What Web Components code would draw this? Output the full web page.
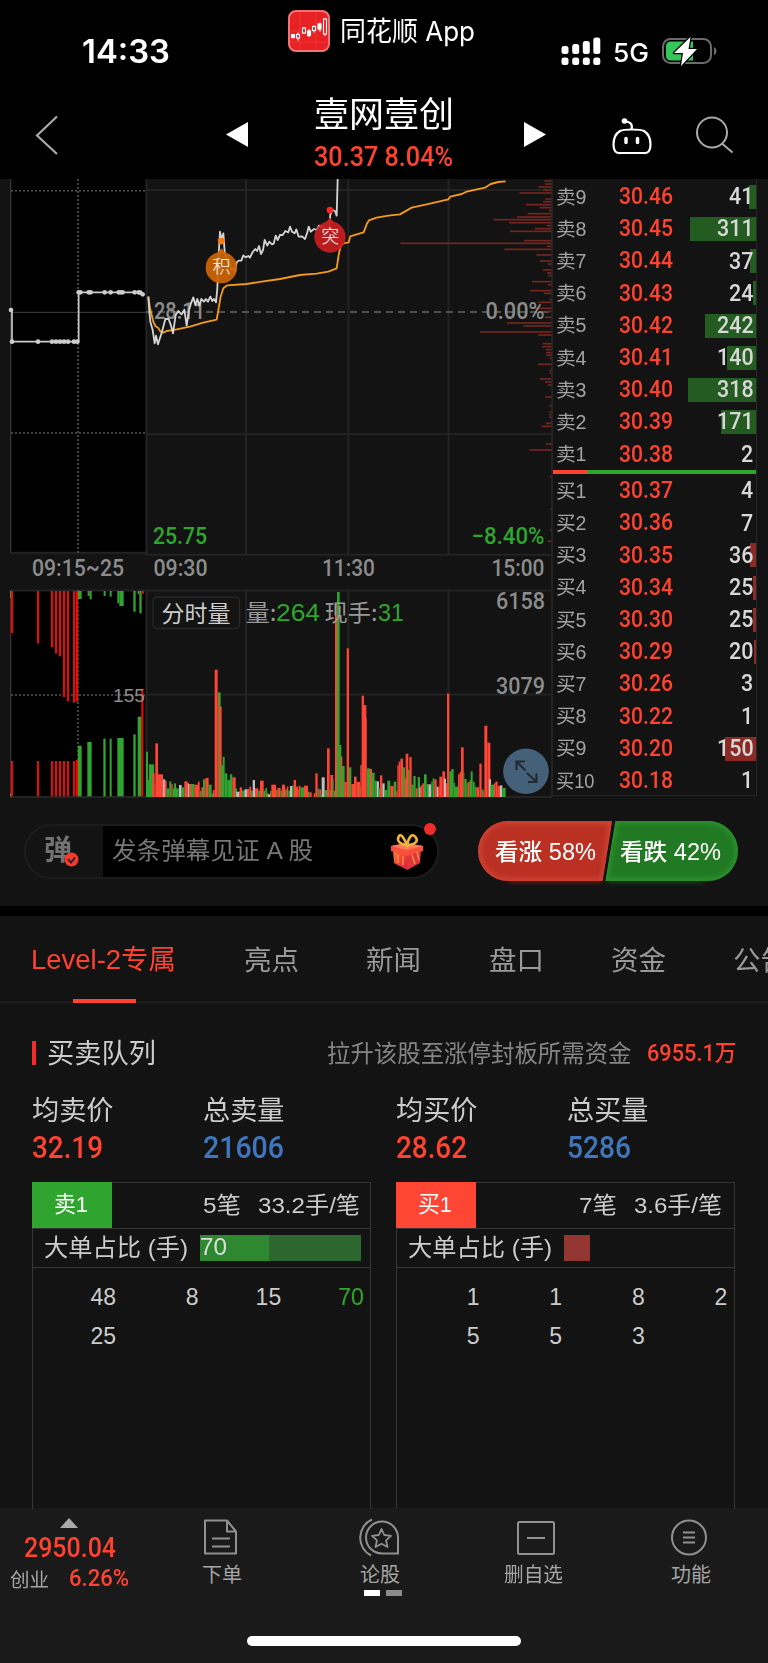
<!DOCTYPE html>
<html lang="zh-CN">
<head>
<meta charset="utf-8">
<title>壹网壹创</title>
<style>
html,body{margin:0;padding:0;background:#131313}
body{width:768px;height:1663px;overflow:hidden}
</style>
</head>
<body>
<stock-app></stock-app>
<script>
const CJK = "'Noto Sans CJK SC','Noto Sans',sans-serif";
const NUM = 'Roboto,' + CJK;
const ARI = "'Liberation Sans'," + CJK;
const define = (name, render, after) => customElements.define(name, class extends HTMLElement {
  connectedCallback() {
    if (this.shadowRoot) return;
    this.attachShadow({mode: 'open'}).innerHTML = render(this);
    if (after) after(this);
  }
});

/* Text squeezed or stretched to an exact width */
define('fit-text', el => `<style>
:host{display:inline-block;flex:none;line-height:1.2;white-space:nowrap;width:${el.getAttribute('w')}px;font-size:${el.getAttribute('s')}px}
span{display:inline-block;transform-origin:0 50%}</style><span><slot></slot></span>`,
el => {
  const s = el.shadowRoot.querySelector('span');
  const n = s.getBoundingClientRect().width;
  if (n) s.style.transform = `scaleX(${el.getAttribute('w') / n})`;
});

define('status-bar', () => `<style>
:host{display:grid;grid-template-columns:288px 273px 1fr;height:80px;color:#fff;font-family:Inter,${CJK}}
.time{padding:33px 0 0 82px;font-weight:600}
.app{display:flex;gap:9.500px;padding-top:10px}
.app fit-text{margin-top:6px}
.sys{display:flex;align-items:flex-start}
.net{margin:37px 0 0 12px;font-weight:500}
</style>
<div class="time"><fit-text w="88" s="32">14:33</fit-text></div>
<div class="app"><svg width="42" height="42" viewBox="0 0 42 42"><rect x="1" y="1" width="40" height="40" rx="7" fill="#e82224" stroke="#f47376" stroke-width="2"/>
<path d="M12 2v38M28 2v38M2 21h38M2 32h38" stroke="#ef4343" stroke-width=".6"/>
<g stroke="#fff" stroke-width="1.1" fill="#fff"><path d="M5 24v4.500M10 22.500v8M16 17v7M21 19v8M26 15.500v7M32 12.500v9M37 8v18"/><rect x="3.500" y="24.500" width="3" height="3"/><rect x="8.500" y="24.500" width="3" height="3.500" fill="#e82224"/><rect x="14.500" y="18" width="3" height="5" fill="#e82224"/><rect x="19.500" y="21" width="3" height="4.500"/><rect x="24.500" y="16.500" width="3" height="4" fill="#e82224"/><rect x="30" y="14" width="3" height="5"/><rect x="35.500" y="9" width="3" height="15" fill="#e82224"/></g></svg>
<fit-text w="135" s="27">同花顺 App</fit-text></div>
<div class="sys"><svg width="40" height="68" viewBox="0 0 40 68" fill="#fff"><rect x=".5" y="46" width="7" height="8" rx="2.500"/><rect x="11.200" y="44" width="7" height="10" rx="2.500"/><rect x="21.800" y="41" width="7" height="13" rx="2.500"/><rect x="32.300" y="37.500" width="7" height="16.500" rx="2.500"/><rect x=".5" y="57.500" width="7" height="7.500" rx="2.500"/><rect x="11.200" y="57.500" width="7" height="7.500" rx="2.500"/><rect x="21.800" y="57.500" width="7" height="7.500" rx="2.500"/><rect x="32.300" y="57.500" width="7" height="7.500" rx="2.500"/></svg>
<div class="net"><fit-text w="36" s="26">5G</fit-text></div>
<svg style="margin:36px 0 0 12px" width="56" height="30" viewBox="0 0 56 30"><rect x="2" y="3" width="48" height="24" rx="7.500" fill="none" stroke="#6b6b6b" stroke-width="2"/><path d="M53 11q2.500 1 2.500 4t-2.500 4z" fill="#6b6b6b"/><path d="M10 5.500h22v19H10q-5 0-5-5v-9q0-5 5-5z" fill="#34c759"/><path d="M29.500 1L13 17h9L20 30 36 13h-8.500z" fill="#fff" stroke="#000" stroke-width="2.500" stroke-linejoin="round" paint-order="stroke"/></svg></div>`);

define('stock-header', () => `<style>
:host{display:grid;grid-template-columns:226px 88px 140px 158px 1fr;height:99px;color:#fff;font-family:${NUM}}
svg{display:block}
.name{display:flex;flex-direction:column;padding-top:11px;height:84px}
.price{color:#ff4330;margin-top:8px;font-weight:500}
.r{display:flex}
</style>
<svg width="226" height="90"><path d="M57 36.500L37 55.500 57 74" fill="none" stroke="#aaa" stroke-width="2.200"/></svg>
<svg width="88" height="90"><path d="M0 54.500L22 42v25z" fill="#fff"/></svg>
<div class="name"><fit-text w="140" s="35" style="font-family:${CJK}">壹网壹创</fit-text><fit-text class="price" w="139" s="27">30.37 8.04%</fit-text></div>
<svg width="158" height="90"><path d="M70 42v25l22-12.500z" fill="#fff"/></svg>
<div class="r"><svg width="84" height="90"><g fill="none" stroke="#fff" stroke-width="2.200"><path d="M8 51Q11 49.500 20 49.500t12 1.500Q38.500 55 38.500 64.500t-7 8.500h-23q-7 1-7-8.500T8 51z"/><path d="M19.500 49.500Q21.500 42 13 41.500"/></g><circle cx="12.500" cy="41" r="2.800" fill="#fff"/><path d="M14 58.500v4M25.500 58.500v4" stroke="#fff" stroke-width="3.500" stroke-linecap="round"/></svg>
<svg width="60" height="90"><g fill="none" stroke="#aaa" stroke-width="2"><circle cx="16" cy="52.500" r="15"/><path d="M26 63.500l10.500 9"/></g></svg></div>`);

/* ---- intraday chart ---- */
const R = '#ff4533', G = '#2fa52f', W = '#bdbdbd';
const profile = [18,823,27,825,36,805,45,819,54,748,72,826,80,819,89,767,98,810,107,837,116,773,126,741,134,670,143,717,152,830,161,795,169,720,197,763,205,391,214,831,223,703,240,799,258,809,267,833,285,819,294,831,302,835,320,786,329,834,347,781,355,821,373,839,382,805,400,792,409,830,427,825,444,711,453,760,471,630,480,804,506,818,515,816,524,828,533,828,541,829,550,839,568,804,587,838,595,840,612,809,621,825,630,834,666,826,692,838,710,838,719,838,727,838,745,828,754,814,807,828,825,779,905,840,1002,841,1065,840,1099,833];
const volA = 'g438-444 515,g444-448 600,g447-462 553,r457-464 580,r464-466 610,r466-474 490,r474-489 583,w489-496 598,r494-500 603,g500-508 625,g508-514 604,r514-518 612,g518-522 625,g522-528 610,g528-536 625,w537-545 615,g545-553 622,r553-563 604,w563-567 610,r567-573 612,g573-583 612,r583-594 614,r594-599 605,g599-604 633,r604-609 622,g609-616 598,r616-626 594,g626-635 614,g635-640 640,r639-644 630,g654-662 337,r659-665 380,r644-653 269,r653-656 350,g663-670 556,g668-674 530,g674-682 580,g682-690 600,g690-697 583,r697-707 592,g705-711 625,w709-719 635,r719-726 622,g726-733 632,w733-741 628,r741-748 627,r748-753 620,g753-758 632,w758-765 600,r765-775 625,g775-780 632,r780-791 602,g790-796 632,g796-801 624,r801-806 640,w804-810 643';
const volB = 'g0-4 633,r4-18 614,g18-22 630,r22-32 624,g32-36 632,r36-45 614,g45-50 628,r50-55 620,g55-60 632,w60-66 618,g66-71 616,r71-78 600,r78-84 620,g84-86 628,r86-91 617,g91-102 622,r102-114 617,g114-119 635,r119-125 637,r131-136 640,r136-143 580,g143-148 626,r148-153 628,g150-155 645,w155-164 592,g164-171 630,r171-179 505,g179-183 630,r181-189 585,g187-191 597,g191-195 632,r195-201 70,g207-214 495,g201-209 36,r213-217 530,g216-224 558,r223-230 606,g236-244 562,r230-237 205,r244-252 612,r252-260 590,r260-270 606,g269-273 620,r271-275 555,r275-282 347,r281-289 375,r289-291 415,g291-300 565,r300-306 567,g305-314 578,g314-320 602,w320-327 604,g325-330 625,r330-337 586,w337-344 610,g344-352 630,g352-361 602,r361-371 618,g371-379 605,r379-383 634,r382-386 556,r386-391 545,r391-399 536,g398-405 562,r405-408 595,r407-415 521,g414-419 570,r418-425 531,g424-430 614,g430-437 588,r437-443 625,g443-450 591,w448-452 622,r452-457 616,r457-462 610,g462-470 583,g470-475 612,w475-484 613,g484-488 604,g488-493 595,r493-500 598,w500-504 620,r504-509 620,r508-517 590,r517-525 574,w522-528 596,r528-531 610,r531-538 341,g538-546 574,g544-551 567,g551-555 608,g555-564 620,r564-569 583,r569-573 576,r573-581 502,g580-583 577,g583-590 597,g590-593 610,r593-599 606,g599-603 600,g602-608 574,g608-614 605,g614-619 620,r619-627 622,r628-635 551,g635-640 628,r640-643 632,r643-652 437,r652-661 488,w657-663 598,g661-672 614,r672-676 610,r676-683 605,r683-690 618,w690-697 616,g697-707 624';
const vol = s => s.split(',').map(b => {
  const [, c, a, z, t] = b.match(/(.)(\d+)-(\d+) (\d+)/);
  return `<rect x="${a}" y="${t}" width="${z - a}" height="${651 - t}" fill="${{r: R, g: G, w: W}[c]}"/>`;
}).join('');
const boxes = (list, c) => list.map(([a, z, t, b]) => `<rect x="${a}" y="${t}" width="${z - a}" height="${b - t}" fill="${c}"/>`).join('');
const T = (x, y, w, s, t, c, f = NUM, k = 500) => `<text x="${x}" y="${y}" textLength="${w}" lengthAdjust="spacingAndGlyphs" font-size="${s}" fill="${c}" font-weight="${k}" style="font-family:${f}">${t}</text>`;
const redX = [33,111,153,165,177,189,201,219,228], redB = [159,190,201,221,229,351,363,368,365];

define('intraday-chart', () => `<style>:host{display:block;width:553px;height:626px}svg{display:block}</style>
<svg width="553" height="626" viewBox="0 179 553 626">
<rect x="10.500" y="179" width="135" height="374" fill="#000"/><rect x="10.500" y="591" width="135" height="206" fill="#000"/>
<g stroke="#232323" stroke-width="2" fill="none">
<path d="M146.500 179v376M246 179v376M348.300 179v376M448.500 179v376M552 179v618M146 190h406M146 434.300h406M146 554.700h406M10 552.700h136"/>
<path d="M10 590.500h542M146 694.500h406M10 797h542M146.500 590v207M246 590v207M348.300 590v207M448.500 590v207"/></g>
<path d="M10.700 179v374M10.700 590v208" stroke="#3a3a3a" stroke-width="1.200"/>
<path d="M11 190.800h134M11 433h134M78 179v374M11 695h134M78 590v206" stroke="#555" stroke-width="1.600" stroke-dasharray="2 2"/>
<path d="M11 312.300h135" stroke="#333" stroke-width="1.200"/>
<path d="M146 312h406" stroke="#666" stroke-width="1.500" stroke-dasharray="7 5"/>
<g transform="translate(270 175) scale(.33333)" fill="#74261f">${profile.map((y, i) => i % 2 ? '' : `<rect x="${profile[i + 1]}" y="${y - 2.5}" width="${844 - profile[i + 1]}" height="5"/>`).join('')}</g>
${T(154, 319, 51, 23, '28.11', '#8c8c8c')}${T(485.500, 319, 59, 23, '0.00%', '#8c8c8c')}
${T(153, 544, 54, 23, '25.75', G)}${T(471.500, 544, 73, 23, '−8.40%', G)}
${T(32, 575.500, 92, 23, '09:15~25', '#8c8c8c')}${T(153.500, 575.500, 54, 23, '09:30', '#8c8c8c')}${T(322, 575.500, 53, 23, '11:30', '#8c8c8c')}${T(491.500, 575.500, 53, 23, '15:00', '#8c8c8c')}
<g transform="translate(0 175) scale(.33333)" fill="none" stroke-linejoin="round">
<path d="M33 400l3 12v88h200V352h180l16 8" stroke="#ccc" stroke-width="5"/>
<g fill="#ccc">${[[36,500],[114,500],[156,500],[168,500],[180,500],[192,500],[204,500],[222,500],[232,500],[236,352],[241,352],[266,352],[272,352],[314,352],[332,352],[356,352],[362,352],[368,352],[404,352],[416,352],[421,353],[428,358],[33,405]].map(p => `<circle cx="${p[0]}" cy="${p[1]}" r="7"/>`).join('')}</g>
<path d="M445 365L450 400 460 440 466 453 474 458 482 470 490 473 500 468 530 463 570 455 610 443 650 434 656 400 662 365 670 340 682 331 740 327 790 319 840 312 900 300 950 296 985 290 1010 280 1016 240 1022 213 1030 205 1046 202 1051 184 1070 178 1091 172 1100 148 1107 136 1130 128 1165 122 1200 118 1235 98 1280 88 1345 73 1351 65 1385 57 1400 50 1455 38 1472 27 1495 21 1517 19" stroke="#f59a1c" stroke-width="5.500"/>
<path d="M445 365L448 410 451 440 458 465 464 505 468 482 474 508 486 470 496 432 506 432 514 455 519 475 527 420 535 408 545 418 553 404 560 452 567 405 573 385 580 367 586 390 592 372 598 392 604 372 612 380 618 372 624 380 631 365 637 378 642 372 648 382 652 340 656 240 660 170 665 195 670 175 674 230 680 255 688 265 694 285 700 278 705 290 710 262 716 257 724 257 730 241 737 247 745 243 750 248 758 231 766 222 771 228 777 213 783 237 789 225 794 195 802 212 808 200 816 208 821 206 827 182 833 195 840 180 848 180 856 168 865 172 870 155 876 170 884 175 889 163 896 185 906 184 915 192 922 172 926 155 932 170 942 162 950 165 957 152 968 158 980 163 988 160 991 118 998 105 1005 108 1010 122 1013 12" stroke="#d2d2d2" stroke-width="5.500"/>
<circle cx="664" cy="278" r="47" fill="#cc6404" fill-opacity=".93"/><path d="M650 236l14-16 14 16z" fill="#cc6404"/><circle cx="664" cy="198" r="10" fill="#ff7a0e"/>
<circle cx="990" cy="186" r="47" fill="#c71e20" fill-opacity=".93"/><path d="M976 144l14-16 14 16z" fill="#c71e20"/><circle cx="990" cy="105" r="10" fill="#ff2626"/>
</g>
${T(212.500, 273, 18, 18, '积', '#fff', CJK, 300)}${T(321.300, 243, 18, 18, '突', '#fff', CJK, 300)}
<g transform="translate(0 580) scale(.33333)">
${boxes(redX.map((x, i) => [x, x + 6, 33, redB[i]]), '#f40404')}${boxes(redX.map(x => [x, x + 6, x == 228 ? 540 : 543, 649]), '#f40404')}
${boxes([[30,33,33,55],[234,245,33,57],[263,269,33,48],[269,275,33,58],[311,317,33,48],[329,335,33,50],[352,358,33,70],[358,371,33,78],[400,407,33,95],[413,418,33,42],[418,425,33,100],[234,245,497,649],[262,275,486,649],[310,317,476,649],[329,335,476,649],[352,371,474,649],[400,407,463,649],[413,425,410,649],[30,33,641,649]], G)}
${boxes([[425,432,33,41],[424,430,326,649]], '#f40404')}${vol(volA)}</g>
<g transform="translate(270 580) scale(.33333)">${vol(volB)}</g>
${T(113, 701.500, 32, 18.5, '155', '#8c8c8c', ARI, 400)}
<rect x="153" y="597" width="86.500" height="31.500" rx="4" fill="#131313" stroke="#272727" stroke-width="1.500"/>
${T(161.500, 622, 69, 23, '分时量', '#ccc', CJK, 400)}
${T(245.500, 621, 31, 23, '量:', '#999', CJK, 400)}${T(276, 620.500, 44, 24.5, '264', G, ARI, 400)}
${T(324.500, 621, 53, 23, '现手:', '#999', CJK, 400)}${T(378, 620.500, 26, 24.5, '31', G, ARI, 400)}
${T(496, 609, 49, 23, '6158', '#8c8c8c')}${T(496, 693.500, 49, 23, '3079', '#8c8c8c')}
<circle cx="526" cy="771.300" r="22.800" fill="#456179"/>
<path d="M516.500 770v-8.500h8.500M516.500 761.500l9 9M527 773l9.500 9M536.500 773.500v8.500h-8.500" fill="none" stroke="#222b33" stroke-width="2.200"/>
</svg>`);

/* ---- order book ---- */
define('order-row', el => `<style>
:host{display:grid;box-sizing:border-box;grid-template-columns:63px 54px 1fr;align-items:center;height:32.200px;padding:0 2.500px 1.500px 3px;font-family:${NUM};font-weight:500;
background:linear-gradient(${el.dataset.c},${el.dataset.c}) right center/${el.dataset.w}px 24px no-repeat}
.l{color:#a3a3a3;font-weight:400;font-family:${ARI};padding-top:2.500px}.p{color:#ff4330}.q{color:#d8d8d8;text-align:right;height:28px}
</style><fit-text class="l" w="${el.dataset.l.length > 2 ? 38.5 : 30.5}" s="19.500">${el.dataset.l}</fit-text>
<fit-text class="p" w="54" s="23.500">${el.dataset.p}</fit-text><div class="q"><fit-text w="${12.2 * el.dataset.q.length}" s="23.500">${el.dataset.q}</fit-text></div>`);
const asks = [['卖9','30.46',41,7],['卖8','30.45',311,66],['卖7','30.44',37,6],['卖6','30.43',24,3],['卖5','30.42',242,51],['卖4','30.41',140,29],['卖3','30.40',318,68],['卖2','30.39',171,35],['卖1','30.38',2,0]];
const bids = [['买1','30.37',4,0],['买2','30.36',7,0],['买3','30.35',36,6],['买4','30.34',25,3],['买5','30.30',25,3],['买6','30.29',20,2.5],['买7','30.26',3,0],['买8','30.22',1,0],['买9','30.20',150,31],['买10','30.18',1,0]];
const rows = (a, c) => a.map(r => `<order-row data-l="${r[0]}" data-p="${r[1]}" data-q="${r[2]}" data-w="${r[3]}" data-c="${c}"></order-row>`).join('');
define('order-book', () => `<style>
:host{display:block;box-sizing:border-box;width:204px;height:617px;padding-top:1.800px;border-right:1px solid #282828;border-bottom:1px solid #282828}
.div{height:4px;background:linear-gradient(90deg,#ff4330 34px,#2fa52f 34px);margin-bottom:.5px}
</style>${rows(asks, '#235b21')}<div class="div"></div>${rows(bids, '#8a2a25')}`);

/* ---- comment + vote bar ---- */
define('danmu-bar', () => `<style>
:host{display:flex;box-sizing:border-box;height:101px;padding:16px 29px 0 24px;font-family:${ARI}}
.box{position:relative;box-sizing:border-box;display:flex;flex:none;width:415px;height:55px;margin-top:2.500px;border:2px solid #1c1c1c;border-radius:28px}
.ic{position:relative;flex:none;width:77px;color:#727272;font-weight:700;box-sizing:border-box;padding:8px 0 0 18px}
.ic svg{position:absolute;left:38px;top:26px}
.in{flex:1;display:flex;align-items:center;background:#000;border-radius:0 26px 26px 0;color:#777;padding:1px 13px 0 9px;justify-content:space-between}
.dot{position:absolute;right:1px;top:-3px;width:12px;height:12px;border-radius:50%;background:#ee2c2c}
.vote{position:relative;flex:none;margin-left:39px;width:261px;height:66px;color:#fff;font-weight:500}
.vote .t{position:absolute;inset:0;display:flex;padding:18px 0 0 16.500px;gap:24.500px}
</style>
<div class="box"><div class="ic"><fit-text w="28" s="28">弹</fit-text><svg width="15" height="15"><circle cx="7.500" cy="7.500" r="7" fill="#f23a2e"/><path d="M4 7l3 3.500L11 5.500" fill="none" stroke="#222" stroke-width="1.800"/></svg></div>
<div class="in"><fit-text w="201" s="24">发条弹幕见证 A 股</fit-text>
<svg width="34" height="38" viewBox="0 0 34 38"><defs><linearGradient id="g" x1="0" y1="0" x2="1" y2="1"><stop offset="0" stop-color="#ff7a4a"/><stop offset=".5" stop-color="#f4452e"/><stop offset="1" stop-color="#d3204d"/></linearGradient></defs>
<path d="M3 17l14 4v16L4 30z" fill="url(#g)"/><path d="M17 21l14-4-1 13-13 7z" fill="#e2343a"/><path d="M1 13l15-3 17 3v5l-16 5-16-5z" fill="#f8503a"/><path d="M1 13l15-3 17 3-16 4z" fill="#ff7857"/><path d="M8 22v8M13 23v9M22 22l3 9M27 19l2 8" stroke="#ffa053" stroke-width="1.200"/>
<path d="M17 12.500Q6 10 8.500 4t8.500 8q3.500-14 8.500-8T17 12.500" fill="none" stroke="#f0b43c" stroke-width="2.600"/></svg></div><i class="dot"></i></div>
<div class="vote"><svg width="261" height="66"><defs><filter id="b" x="-10%" y="-20%" width="120%" height="140%"><feGaussianBlur stdDeviation="2.500"/></filter>
<clipPath id="l"><path d="M30 0H134l-9 60H30A30 30 0 0 1 30 0z"/></clipPath><clipPath id="r"><path d="M137 0h93a30 30 0 0 1 0 60H127z"/></clipPath></defs>
<path d="M30 2H132l-9 60H30z" fill="#5c1b17" filter="url(#b)"/><path d="M137 2h93l-4 60H129z" fill="#163f18" filter="url(#b)"/>
<g clip-path="url(#l)"><rect width="140" height="60" fill="#ba3124"/><path d="M30 0H134l-9 60H30A30 30 0 0 1 30 0z" fill="none" stroke="#d34434" stroke-width="5" filter="url(#b)"/></g>
<g clip-path="url(#r)"><rect x="120" width="141" height="60" fill="#217a23"/><path d="M137 0h93a30 30 0 0 1 0 60H127z" fill="none" stroke="#2d942e" stroke-width="5" filter="url(#b)"/></g><path d="M136 0l-10 60" stroke="#131313" stroke-width="2.500"/></svg>
<div class="t"><fit-text w="101" s="23">看涨 58%</fit-text><fit-text w="101" s="23">看跌 42%</fit-text></div></div>`);

define('tab-strip', () => `<style>
:host{display:flex;box-sizing:border-box;height:97px;border-top:10px solid #000;box-shadow:inset 0 -1.500px #202020;padding:27px 0 0 31px;color:#999;font-family:${CJK};overflow:hidden}
.on{color:#ff4330;position:relative;width:213px}
.on fit-text{margin-top:1px}
.on:after{content:"";position:absolute;left:42px;top:55.500px;width:63px;height:4.500px;background:#ff4330}
span{flex:none;width:122.300px}
</style>
<span class="on"><fit-text w="145" s="27" style="font-family:${ARI}">Level-2专属</fit-text></span>
${['亮点','新闻','盘口','资金','公告'].map(t => `<span><fit-text w="55" s="27">${t}</fit-text></span>`).join('')}`);

/* ---- buy / sell queue ---- */
define('queue-panel', el => { const d = el.dataset; return `<style>
:host{display:block;box-sizing:border-box;width:339px;height:327px;border:1px solid #363636;border-bottom:0;color:#ccc;font-family:${ARI}}
.h{display:flex;height:45px;border-bottom:1px solid #363636;align-items:center;padding-right:${d.pr}px}
.tag{box-sizing:border-box;width:80px;height:46.500px;background:${d.c};margin:-1px auto 0 -1px;color:#fff;padding:9px 0 0 22px}
.a{margin-right:17px}
.b{display:flex;box-sizing:border-box;height:39px;border-bottom:1px solid #363636;align-items:center;padding-left:11px}
.bar{height:26px;width:${d.bw}px;background:${d.bg};margin-left:12px;display:flex;align-items:center;color:#ddd}
.n{display:grid;grid-template-columns:${d.first}px repeat(3,82.600px);grid-auto-rows:39px;padding-top:9.500px;font-size:23px;line-height:39px;text-align:right}
.hi{color:#2fa52f}
</style><div class="h"><div class="tag"><fit-text w="34" s="22.500">${d.tag}</fit-text></div><fit-text class="a" w="38" s="22.500">${d.n}</fit-text><fit-text w="${d.aw}" s="22.500">${d.avg}</fit-text></div>
<div class="b"><fit-text w="144" s="24">大单占比 (手)</fit-text><div class="bar">${d.v ? `<fit-text w="27" s="23">${d.v}</fit-text>` : ''}</div></div>
<div class="n">${d.list.split(',').map(v => `<span class="${v == d.v ? 'hi' : ''}">${v}</span>`).join('')}</div>`; });

define('queue-section', () => `<style>
:host{display:block;height:505px;font-family:${CJK};color:#ccc}
.t{display:flex;align-items:center;height:40px;padding:29.500px 32px .5px 32px}
.t i{width:4px;height:24px;background:#f32b2b;margin-right:11px}
.sub{color:#858585;margin-left:auto;margin-right:15.500px}
.amt{color:#ff4330;font-family:${NUM};font-weight:500;padding-top:2px}
.s{display:grid;grid-template-columns:171px 193px 171px 1fr;padding:20px 0 0 32px;height:89px;box-sizing:content-box}
.s>div{display:flex;flex-direction:column}
.v{font-family:${NUM};font-weight:500;color:#ff4330;margin-top:3px}.bl{color:#3f76bd}
.p{display:flex;gap:25px;padding-left:32px}
</style>
<div class="t"><i></i><fit-text w="109" s="27">买卖队列</fit-text><fit-text class="sub" w="304.500" s="23.500">拉升该股至涨停封板所需资金</fit-text><fit-text class="amt" w="89.500" s="23">6955.1万</fit-text></div>
<div class="s">${[['均卖价','32.19',71,''],['总卖量','21606',81,'bl'],['均买价','28.62',71,''],['总买量','5286',64,'bl']].map(a => `<div><fit-text w="81.500" s="27">${a[0]}</fit-text><fit-text class="v ${a[3]}" w="${a[2]}" s="32">${a[1]}</fit-text></div>`).join('')}</div>
<div class="p"><queue-panel data-c="#2fa52f" data-tag="卖1" data-n="5笔" data-avg="33.2手/笔" data-aw="102" data-pr="10" data-bw="161" data-first="83" data-bg="linear-gradient(90deg,#2e8830 69px,#2d6730 69px)" data-v="70" data-list="48,8,15,70,25"></queue-panel>
<queue-panel data-c="#ff4533" data-tag="买1" data-n="7笔" data-avg="3.6手/笔" data-aw="88" data-pr="12" data-bw="26" data-first="82.500" data-bg="#933530" data-list="1,1,8,2,5,5,3"></queue-panel></div>`);

/* ---- bottom bar ---- */
define('nav-item', el => `<style>:host{display:flex;flex-direction:column;align-items:center;gap:5px;color:#a5a5a5;font-family:${CJK}}</style><slot></slot><fit-text w="${el.dataset.w}" s="20">${el.dataset.t}</fit-text>`);
define('bottom-nav', () => `<style>
:host{display:flex;flex-direction:column;height:155px;background:#1a1a1a;font-family:${NUM};font-weight:500;color:#ff4330}
.r{display:grid;grid-template-columns:139px 166px 150px 157px 158px;height:128px}
.idx{padding:10px 0 0 9px;display:flex;flex-direction:column}
.idx svg{margin-left:51px}
.l{display:flex;margin-top:2px}
nav-item{padding-top:9px;font-weight:400}
.g{fill:none;stroke:#909090;stroke-width:2}
.dots{display:flex;gap:6px;justify-content:center;margin:4px 0 0 6px}.dots i{width:16px;height:6px;background:#fff}.dots i+i{background:#8c8c8c}
.home{width:274px;height:10px;border-radius:5px;background:#fff;margin:0 0 0 247px}
</style>
<div class="r"><div class="idx"><svg width="18" height="10"><path d="M9 0l9 10H0z" fill="#aaa"/></svg><fit-text w="92" s="27" style="margin:4px 0 0 15px">2950.04</fit-text>
<div class="l"><fit-text w="39" s="19" style="color:#a5a5a5;font-weight:400;font-family:${CJK};margin:2px 0 0 1px">创业</fit-text><fit-text w="60" s="23" style="margin-left:20px;margin-top:-1px">6.26%</fit-text></div></div>
<nav-item data-t="下单" data-w="40"><svg class="g" width="40" height="40"><path d="M3 3.500h22l9 11v22H3zM25 3.500v11h9M10 21.500h18M10 29.500h18" stroke-linejoin="round"/></svg></nav-item>
<div><nav-item data-t="论股" data-w="40"><svg class="g" width="44" height="40"><path d="M14 2.500A20 20 0 0 0 13 38.500M40 36.500H24A16 16 0 1 1 40 20.500z"/><path d="M23.500 12l2.700 6 6.800.8-5 4.500 1.500 6.700-6-3.300-6 3.300 1.500-6.700-5-4.500 6.800-.8z" stroke-width="1.800" stroke-linejoin="round"/></svg></nav-item><div class="dots"><i></i><i></i></div></div>
<nav-item data-t="删自选" data-w="59"><svg class="g" width="44" height="40"><rect x="6" y="5" width="36" height="32" rx="1.500"/><path d="M15 21h18"/></svg></nav-item>
<nav-item data-t="功能" data-w="40"><svg class="g" width="40" height="40"><circle cx="18" cy="20.500" r="17"/><path d="M12 15.500h12M12 20.500h12M12 25.500h12"/></svg></nav-item></div>
<div class="home"></div>`);

define('stock-app', () => `<style>
:host{display:block;width:768px;height:1663px;background:#131313;overflow:hidden}
.top{background:#000;height:179px;overflow:hidden}
.mid{display:flex;height:626px}
</style><div class="top"><status-bar></status-bar><stock-header></stock-header></div>
<div class="mid"><intraday-chart></intraday-chart><order-book></order-book></div>
<danmu-bar></danmu-bar><tab-strip></tab-strip><queue-section></queue-section><bottom-nav></bottom-nav>`);
</script>
</body>
</html>
